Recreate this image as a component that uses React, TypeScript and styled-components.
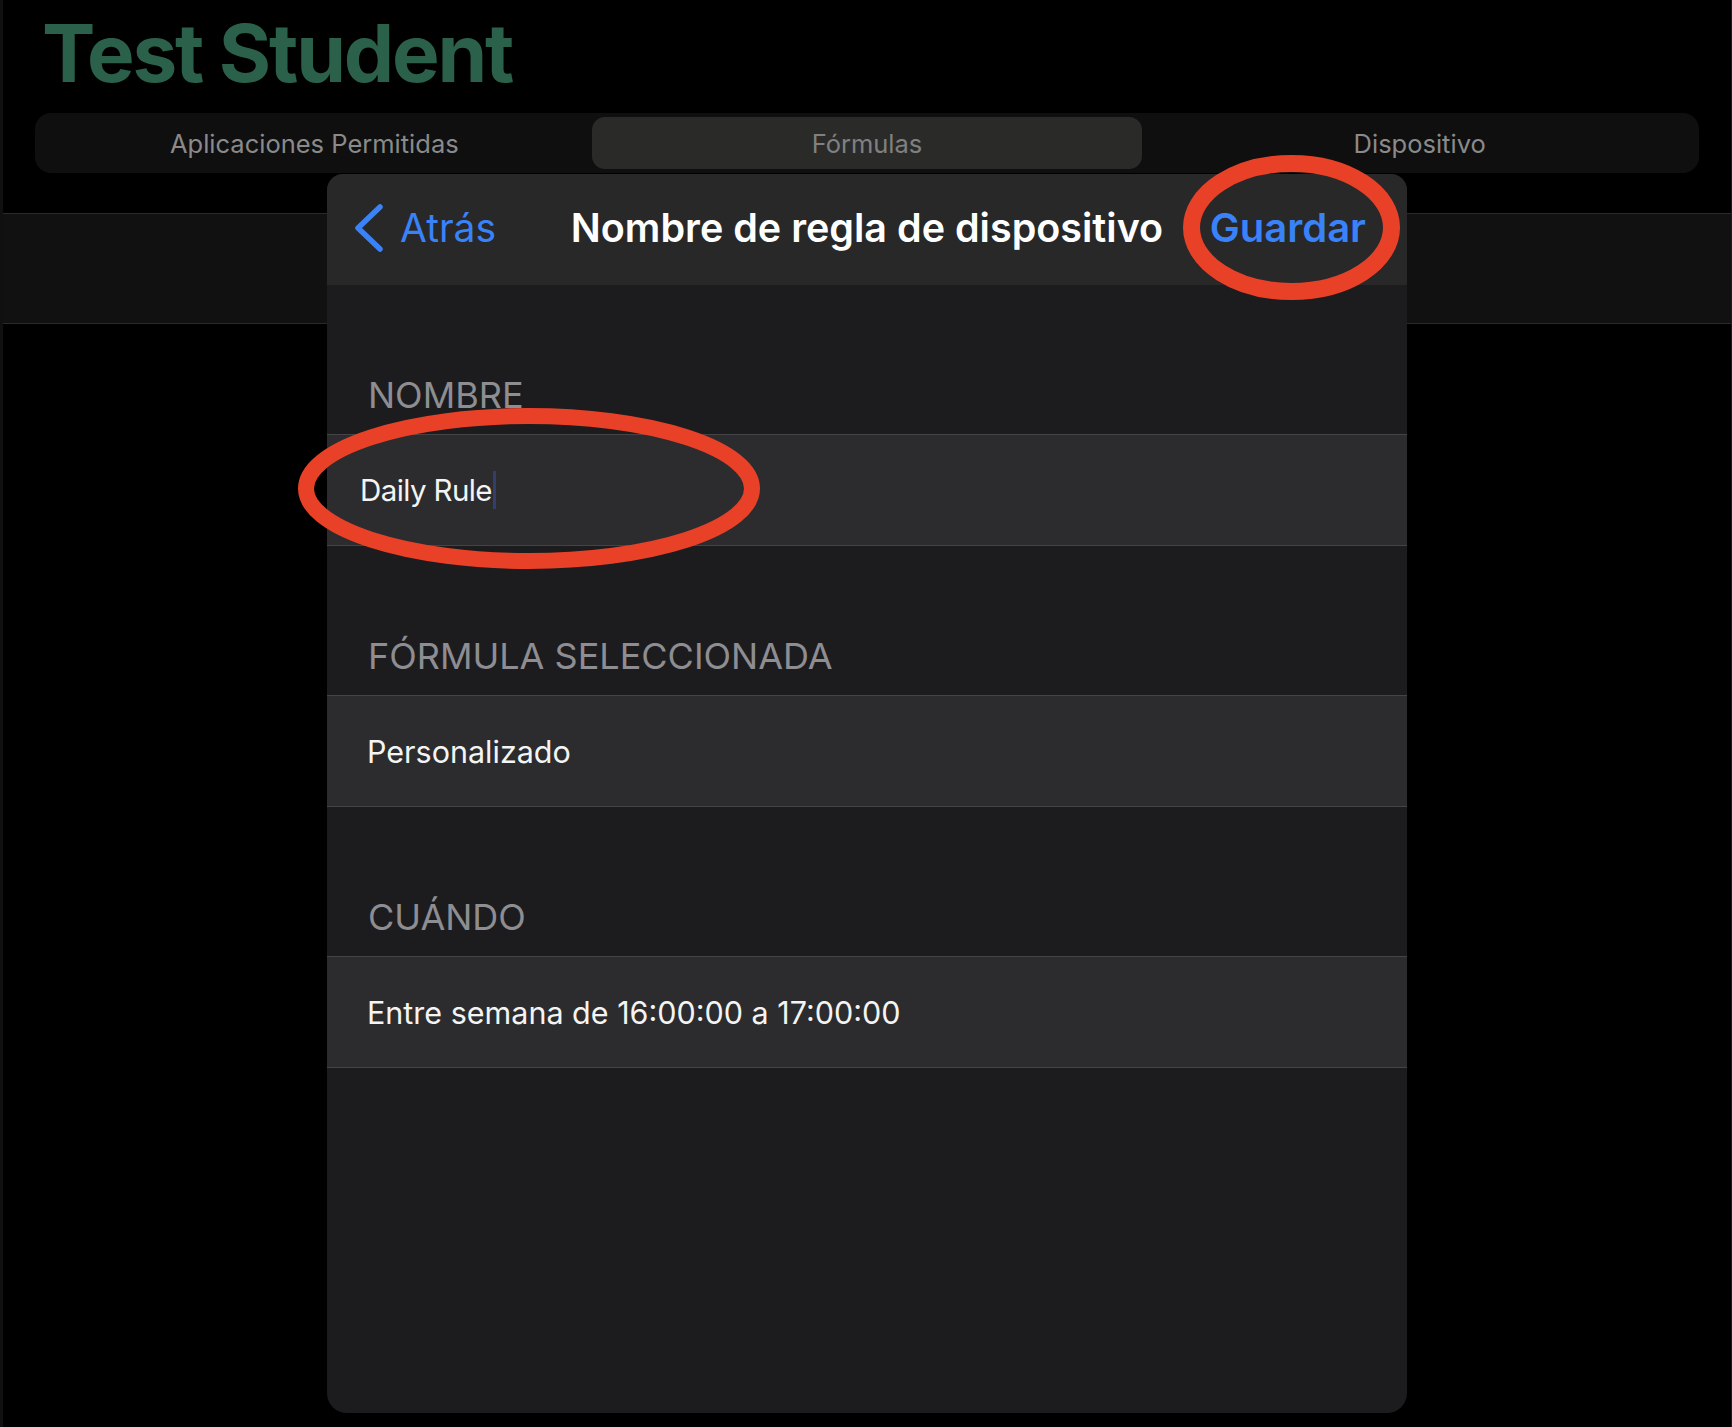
import React from "react";
import styled, { createGlobalStyle } from "styled-components";

const GlobalStyle = createGlobalStyle`
  html, body {
    margin: 0;
    padding: 0;
    background: #000;
  }
  body {
    font-family: Inter, "Noto Sans", "Liberation Sans", sans-serif;
    -webkit-font-smoothing: antialiased;
  }
  * { box-sizing: border-box; }
`;

const Page = styled.div`
  position: relative;
  width: 1732px;
  height: 1427px;
  overflow: hidden;
  background: #000;
  border-left: 3px solid #101010;
  border-right: 1px solid #1c1c1c;
`;

const StudentName = styled.h1`
  margin: 0;
  padding: 13px 0 0 39px;
  font-size: 80px;
  line-height: 80px;
  font-weight: 700;
  letter-spacing: -2.2px;
  color: #2b614a;
`;

const Segmented = styled.div`
  margin: 20px 0 0 32px;
  width: 1664px;
  height: 60px;
  padding: 4px;
  border-radius: 16px;
  background: #0f0f10;
  display: grid;
  grid-template-columns: repeat(3, 1fr);
  gap: 2px;
`;

const Segment = styled.div<{ $active?: boolean }>`
  display: flex;
  align-items: center;
  justify-content: center;
  border-radius: 13px;
  background: ${(p) => (p.$active ? "#2a2b29" : "transparent")};
  color: ${(p) => (p.$active ? "#808080" : "#8a8a8a")};
  font-size: 25.5px;
  font-weight: 400;
`;

const Band = styled.div`
  margin-top: 40px;
  height: 111px;
  background: #111111;
  border-top: 1px solid #2a2a2a;
  border-bottom: 1px solid #2a2a2a;
`;

const Sheet = styled.div`
  position: absolute;
  left: 324px;
  top: 174px;
  width: 1080px;
  height: 1239px;
  background: #1c1c1e;
  border-radius: 16px 16px 20px 20px;
  overflow: hidden;
  display: flex;
  flex-direction: column;
`;

const NavBar = styled.div`
  height: 111px;
  flex: none;
  background: #282828;
  display: grid;
  grid-template-columns: 1fr auto 1fr;
  align-items: center;
  padding: 0 41px 4px 41px;
`;

const BackButton = styled.div`
  display: flex;
  align-items: center;
  gap: 16px;
  margin-left: -14px;
  color: #3a82f7;
  font-size: 39px;
  font-weight: 400;
`;

const NavTitle = styled.div`
  color: #ffffff;
  font-size: 39.5px;
  font-weight: 600;
  white-space: nowrap;
`;

const SaveButton = styled.div`
  justify-self: end;
  color: #3a82f7;
  font-size: 40px;
  font-weight: 600;
`;

const SectionLabel = styled.div`
  height: 149px;
  flex: none;
  display: flex;
  align-items: flex-end;
  padding: 0 0 17px 41px;
  color: #8d8d92;
  font-size: 36px;
  line-height: 44px;
  font-weight: 400;
  text-transform: uppercase;
`;

const Row = styled.div<{ $inset?: number }>`
  height: 112px;
  flex: none;
  display: flex;
  align-items: center;
  padding-left: ${(p) => p.$inset ?? 40}px;
  background: #2c2c2e;
  border-top: 1px solid #444446;
  border-bottom: 1px solid #444446;
  color: #f4f4f4;
  font-size: 30.5px;
  font-weight: 400;
`;

const FieldText = styled.span`
  font-size: 29.5px;
  letter-spacing: -0.6px;
`;

const Caret = styled.span`
  display: inline-block;
  width: 3.5px;
  height: 38px;
  margin-left: 1px;
  background: #323e6e;
`;

const Annotation = styled.svg<{ $x: number; $y: number }>`
  position: absolute;
  left: ${(p) => p.$x}px;
  top: ${(p) => p.$y}px;
  overflow: visible;
  pointer-events: none;
`;

function Chevron() {
  return (
    <svg width="30" height="48" viewBox="0 0 30 48">
      <path
        d="M26 3 L4 24 L26 45"
        fill="none"
        stroke="#3a82f7"
        strokeWidth="5.5"
        strokeLinecap="round"
        strokeLinejoin="round"
      />
    </svg>
  );
}

function Ellipse({ x, y, w, h, stroke }: { x: number; y: number; w: number; h: number; stroke: number }) {
  return (
    <Annotation $x={x} $y={y} width={w} height={h} viewBox={`0 0 ${w} ${h}`}>
      <ellipse
        cx={w / 2}
        cy={h / 2}
        rx={(w - stroke) / 2}
        ry={(h - stroke) / 2}
        fill="none"
        stroke="#e94128"
        strokeWidth={stroke}
      />
    </Annotation>
  );
}

export default function App() {
  return (
    <>
      <GlobalStyle />
      <Page>
        <StudentName>Test Student</StudentName>
        <Segmented>
          <Segment>Aplicaciones Permitidas</Segment>
          <Segment $active>Fórmulas</Segment>
          <Segment>Dispositivo</Segment>
        </Segmented>
        <Band />

        <Sheet>
          <NavBar>
            <BackButton>
              <Chevron />
              <span>Atrás</span>
            </BackButton>
            <NavTitle>Nombre de regla de dispositivo</NavTitle>
            <SaveButton>Guardar</SaveButton>
          </NavBar>

          <SectionLabel>Nombre</SectionLabel>
          <Row $inset={33}>
            <FieldText>Daily Rule</FieldText>
            <Caret />
          </Row>

          <SectionLabel>Fórmula seleccionada</SectionLabel>
          <Row>Personalizado</Row>

          <SectionLabel>Cuándo</SectionLabel>
          <Row>Entre semana de 16:00:00 a 17:00:00</Row>
        </Sheet>

        <Ellipse x={1180} y={155} w={217} h={145} stroke={17} />
        <Ellipse x={295} y={408} w={462} h={161} stroke={16} />
      </Page>
    </>
  );
}
